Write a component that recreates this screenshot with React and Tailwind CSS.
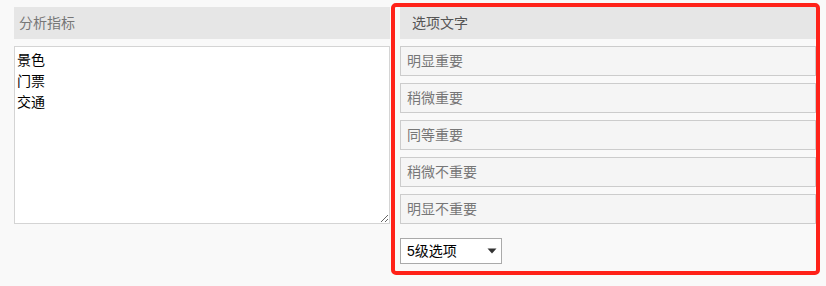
import React from 'react';

const options = ['明显重要', '稍微重要', '同等重要', '稍微不重要', '明显不重要'];

const font = { fontFamily: '"Liberation Sans", "Noto Sans CJK SC", sans-serif' };

export default function App() {
  return (
    <div
      className="w-[826px] h-[286px] bg-[#f9f9f9] pt-[7px] pl-[14px] flex gap-[10px] text-[14px]"
      style={font}
    >
      {/* 左侧：分析指标 */}
      <div className="w-[376px] flex flex-col gap-[7px]">
        <div className="h-[32px] bg-[#e6e6e6] text-[#777] flex items-center pl-[5px]">分析指标</div>
        <textarea
          className="h-[178px] bg-white border border-[#d4d4d4] px-[2px] pt-[3px] text-black leading-[21px] outline-none"
          defaultValue={'景色\n门票\n交通'}
        />
      </div>

      {/* 右侧：选项文字 */}
      <div className="relative w-[416px] flex flex-col">
        <div className="h-[32px] bg-[#e6e6e6] text-[#555] flex items-center pl-[12px]">选项文字</div>
        <div className="flex flex-col gap-[7px] mt-[7px]">
          {options.map((o) => (
            <div
              key={o}
              className="h-[30px] bg-[#f5f5f5] border border-[#cccccc] text-[#777] flex items-center pl-[6px]"
            >
              {o}
            </div>
          ))}
        </div>
        <div className="mt-[14px] w-[102px] h-[26px] bg-white border border-[#aaaaaa] flex items-center justify-between pl-[6px] pr-[4px] text-black">
          <span>5级选项</span>
          <svg width="10" height="6" viewBox="0 0 10 6">
            <path d="M0.5 0.5 L9.5 0.5 L5 5.5 Z" fill="#333" />
          </svg>
        </div>

        {/* 红色标注框 */}
        <div className="absolute left-[-9px] top-[-4px] w-[429px] h-[272px] border-[4px] border-[#ff2219] rounded-[5px] pointer-events-none" />
      </div>
    </div>
  );
}
